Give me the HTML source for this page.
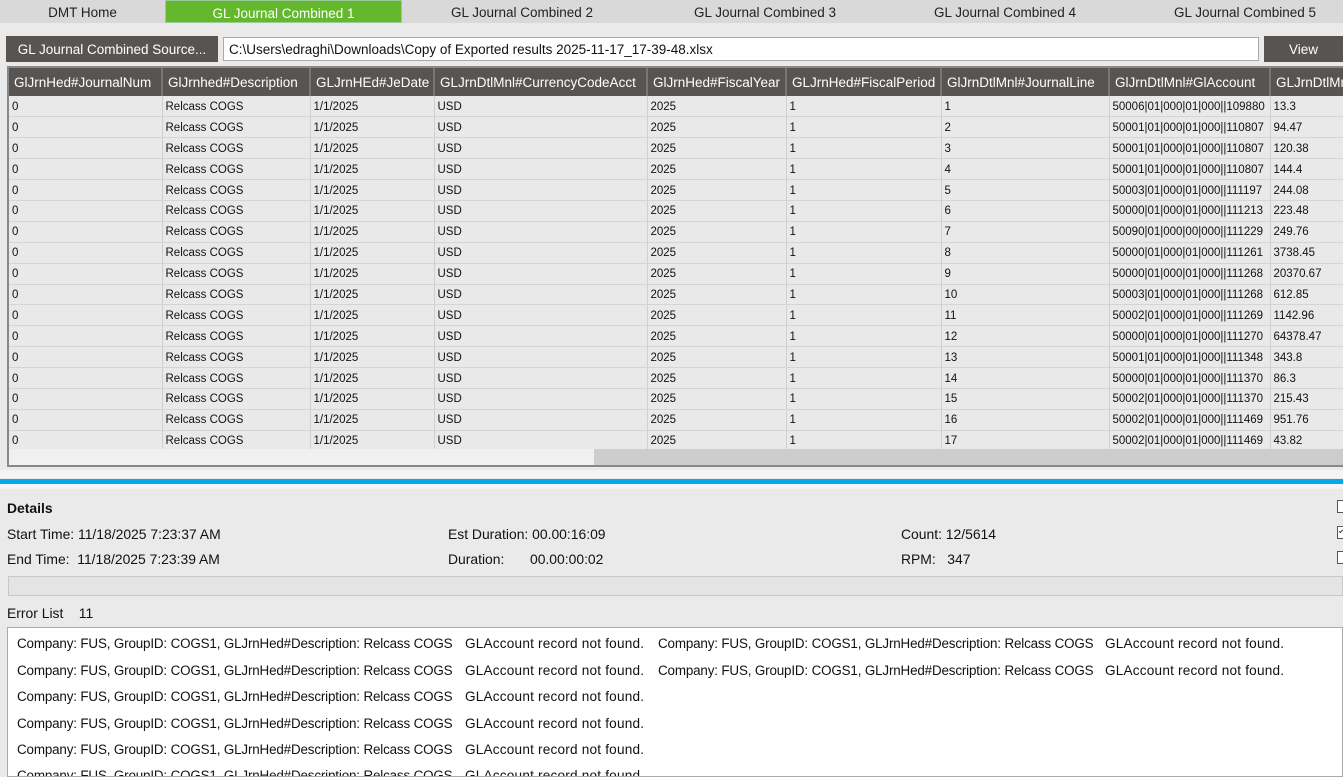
<!DOCTYPE html>
<html><head><meta charset="utf-8"><style>
*{margin:0;padding:0;box-sizing:border-box}
body{width:1343px;height:777px;overflow:hidden;background:#eaeaea;font-family:"Liberation Sans",sans-serif;color:#111;position:relative}
.a{position:absolute;white-space:nowrap}
.tabs{position:absolute;left:0;top:0;width:1343px;height:23px;background:#d9d9d9}
.tab{position:absolute;top:0;height:23px;line-height:25px;font-size:13.5px;text-align:center;color:#222}
.btn{background:#575451;color:#fff;font-size:13.5px;text-align:center}
table{border-collapse:collapse;table-layout:fixed}
th{background:#575451;color:#fff;font-weight:normal;font-size:13.5px;height:28px;text-align:left;padding-left:5px;border-right:2px solid #777;white-space:nowrap;overflow:hidden}
td{height:20.9px;font-size:11.5px;padding-left:3px;padding-top:1px;border-right:1px solid #d0d0d0;border-bottom:1px solid #d5d5d5;background:#e9e9e9;white-space:nowrap;overflow:hidden}
.e{font-size:13.4px;letter-spacing:-0.15px;color:#111}
.f{font-size:13.6px;letter-spacing:0.2px;color:#111}
.d{font-size:13.9px}
</style></head><body>
<div class="tabs"></div>
<div class="tab" style="left:0;width:165px">DMT Home</div>
<div class="tab" style="left:165px;width:237px;background:#63b82d;color:#fff;border:1px solid #9c9">GL Journal Combined 1</div>
<div class="tab" style="left:402px;width:240px">GL Journal Combined 2</div>
<div class="tab" style="left:645px;width:240px">GL Journal Combined 3</div>
<div class="tab" style="left:885px;width:240px">GL Journal Combined 4</div>
<div class="tab" style="left:1125px;width:240px">GL Journal Combined 5</div>

<div class="a btn" style="left:6px;top:36px;width:212px;height:26px;line-height:27px">GL Journal Combined Source...</div>
<div class="a" style="left:223px;top:37px;width:1036px;height:24px;background:#fff;border:1px solid #aaa;font-size:13.5px;line-height:23px;padding-left:5px">C:\Users\edraghi\Downloads\Copy of Exported results 2025-11-17_17-39-48.xlsx</div>
<div class="a btn" style="left:1264px;top:36px;width:79px;height:26px;line-height:27px">View</div>

<div class="a" style="left:7px;top:66px;width:1336px;height:401px;border:2px solid #888;border-right:none;background:#e9e9e9;overflow:hidden">
<table style="width:1400px">
<colgroup><col style="width:153px"><col style="width:148px"><col style="width:124px"><col style="width:213px"><col style="width:139px"><col style="width:155px"><col style="width:168px"><col style="width:161px"><col style="width:139px"></colgroup>
<tr><th>GlJrnHed#JournalNum</th><th>GlJrnhed#Description</th><th>GLJrnHEd#JeDate</th><th>GLJrnDtlMnl#CurrencyCodeAcct</th><th>GlJrnHed#FiscalYear</th><th>GLJrnHed#FiscalPeriod</th><th>GlJrnDtlMnl#JournalLine</th><th>GlJrnDtlMnl#GlAccount</th><th>GLJrnDtlMnl#Amount</th></tr>
<tr><td>0</td><td>Relcass COGS</td><td>1/1/2025</td><td>USD</td><td>2025</td><td>1</td><td>1</td><td>50006|01|000|01|000||109880</td><td>13.3</td></tr>
<tr><td>0</td><td>Relcass COGS</td><td>1/1/2025</td><td>USD</td><td>2025</td><td>1</td><td>2</td><td>50001|01|000|01|000||110807</td><td>94.47</td></tr>
<tr><td>0</td><td>Relcass COGS</td><td>1/1/2025</td><td>USD</td><td>2025</td><td>1</td><td>3</td><td>50001|01|000|01|000||110807</td><td>120.38</td></tr>
<tr><td>0</td><td>Relcass COGS</td><td>1/1/2025</td><td>USD</td><td>2025</td><td>1</td><td>4</td><td>50001|01|000|01|000||110807</td><td>144.4</td></tr>
<tr><td>0</td><td>Relcass COGS</td><td>1/1/2025</td><td>USD</td><td>2025</td><td>1</td><td>5</td><td>50003|01|000|01|000||111197</td><td>244.08</td></tr>
<tr><td>0</td><td>Relcass COGS</td><td>1/1/2025</td><td>USD</td><td>2025</td><td>1</td><td>6</td><td>50000|01|000|01|000||111213</td><td>223.48</td></tr>
<tr><td>0</td><td>Relcass COGS</td><td>1/1/2025</td><td>USD</td><td>2025</td><td>1</td><td>7</td><td>50090|01|000|00|000||111229</td><td>249.76</td></tr>
<tr><td>0</td><td>Relcass COGS</td><td>1/1/2025</td><td>USD</td><td>2025</td><td>1</td><td>8</td><td>50000|01|000|01|000||111261</td><td>3738.45</td></tr>
<tr><td>0</td><td>Relcass COGS</td><td>1/1/2025</td><td>USD</td><td>2025</td><td>1</td><td>9</td><td>50000|01|000|01|000||111268</td><td>20370.67</td></tr>
<tr><td>0</td><td>Relcass COGS</td><td>1/1/2025</td><td>USD</td><td>2025</td><td>1</td><td>10</td><td>50003|01|000|01|000||111268</td><td>612.85</td></tr>
<tr><td>0</td><td>Relcass COGS</td><td>1/1/2025</td><td>USD</td><td>2025</td><td>1</td><td>11</td><td>50002|01|000|01|000||111269</td><td>1142.96</td></tr>
<tr><td>0</td><td>Relcass COGS</td><td>1/1/2025</td><td>USD</td><td>2025</td><td>1</td><td>12</td><td>50000|01|000|01|000||111270</td><td>64378.47</td></tr>
<tr><td>0</td><td>Relcass COGS</td><td>1/1/2025</td><td>USD</td><td>2025</td><td>1</td><td>13</td><td>50001|01|000|01|000||111348</td><td>343.8</td></tr>
<tr><td>0</td><td>Relcass COGS</td><td>1/1/2025</td><td>USD</td><td>2025</td><td>1</td><td>14</td><td>50000|01|000|01|000||111370</td><td>86.3</td></tr>
<tr><td>0</td><td>Relcass COGS</td><td>1/1/2025</td><td>USD</td><td>2025</td><td>1</td><td>15</td><td>50002|01|000|01|000||111370</td><td>215.43</td></tr>
<tr><td>0</td><td>Relcass COGS</td><td>1/1/2025</td><td>USD</td><td>2025</td><td>1</td><td>16</td><td>50002|01|000|01|000||111469</td><td>951.76</td></tr>
<tr><td>0</td><td>Relcass COGS</td><td>1/1/2025</td><td>USD</td><td>2025</td><td>1</td><td>17</td><td>50002|01|000|01|000||111469</td><td>43.82</td></tr>
</table>
<div class="a" style="left:0;top:381px;width:1336px;height:18px;background:#f0f0f0"></div>
<div class="a" style="left:585px;top:381px;width:751px;height:18px;background:#cdcdcd"></div>
</div>

<div class="a" style="left:0;top:470px;width:1343px;height:8px;background:#f4f4f6"></div>
<div class="a" style="left:0;top:479px;width:1343px;height:5px;background:#0aa8e6"></div>
<div class="a" style="left:0;top:484px;width:1343px;height:5px;background:#f4f4f6"></div>

<div class="a d" style="left:7px;top:500px;font-weight:bold">Details</div>
<div class="a d" style="left:7px;top:526px">Start Time: 11/18/2025 7:23:37 AM</div>
<div class="a d" style="left:7px;top:551px">End Time:&nbsp; 11/18/2025 7:23:39 AM</div>
<div class="a d" style="left:448px;top:526px">Est Duration: 00.00:16:09</div>
<div class="a d" style="left:448px;top:551px">Duration:</div>
<div class="a d" style="left:530px;top:551px">00.00:00:02</div>
<div class="a d" style="left:901px;top:526px">Count: 12/5614</div>
<div class="a d" style="left:901px;top:551px">RPM:&nbsp;&nbsp; 347</div>
<div class="a" style="left:1337px;top:500px;width:10px;height:13px;border:1px solid #555;background:#fff"></div>
<div class="a" style="left:1337px;top:526px;width:10px;height:13px;border:1px solid #555;background:#fff"></div>
<div class="a" style="left:1339px;top:530px;width:4px;height:2px;border-left:1px solid #333;border-bottom:1px solid #333;transform:rotate(-45deg)"></div>
<div class="a" style="left:1337px;top:551px;width:10px;height:13px;border:1px solid #555;background:#fff"></div>
<div class="a" style="left:8px;top:576px;width:1335px;height:20px;border:1px solid #c8c8c8;background:#e4e4e4"></div>
<div class="a d" style="left:7px;top:605px">Error List&nbsp;&nbsp;&nbsp; 11</div>

<div class="a" style="left:7px;top:627px;width:1336px;height:150px;background:#fff;border:1px solid #aaa;overflow:hidden">
<div class="a e" style="left:9px;top:8px">Company: FUS, GroupID: COGS1, GLJrnHed#Description: Relcass COGS</div><div class="a f" style="left:457px;top:8px">GLAccount record not found.</div>
<div class="a e" style="left:650px;top:8px">Company: FUS, GroupID: COGS1, GLJrnHed#Description: Relcass COGS</div><div class="a f" style="left:1097px;top:8px">GLAccount record not found.</div>
<div class="a e" style="left:9px;top:35px">Company: FUS, GroupID: COGS1, GLJrnHed#Description: Relcass COGS</div><div class="a f" style="left:457px;top:35px">GLAccount record not found.</div>
<div class="a e" style="left:650px;top:35px">Company: FUS, GroupID: COGS1, GLJrnHed#Description: Relcass COGS</div><div class="a f" style="left:1097px;top:35px">GLAccount record not found.</div>
<div class="a e" style="left:9px;top:61px">Company: FUS, GroupID: COGS1, GLJrnHed#Description: Relcass COGS</div><div class="a f" style="left:457px;top:61px">GLAccount record not found.</div>
<div class="a e" style="left:9px;top:88px">Company: FUS, GroupID: COGS1, GLJrnHed#Description: Relcass COGS</div><div class="a f" style="left:457px;top:88px">GLAccount record not found.</div>
<div class="a e" style="left:9px;top:114px">Company: FUS, GroupID: COGS1, GLJrnHed#Description: Relcass COGS</div><div class="a f" style="left:457px;top:114px">GLAccount record not found.</div>
<div class="a e" style="left:9px;top:140px">Company: FUS, GroupID: COGS1, GLJrnHed#Description: Relcass COGS</div><div class="a f" style="left:457px;top:140px">GLAccount record not found.</div>
</div>
</body></html>
